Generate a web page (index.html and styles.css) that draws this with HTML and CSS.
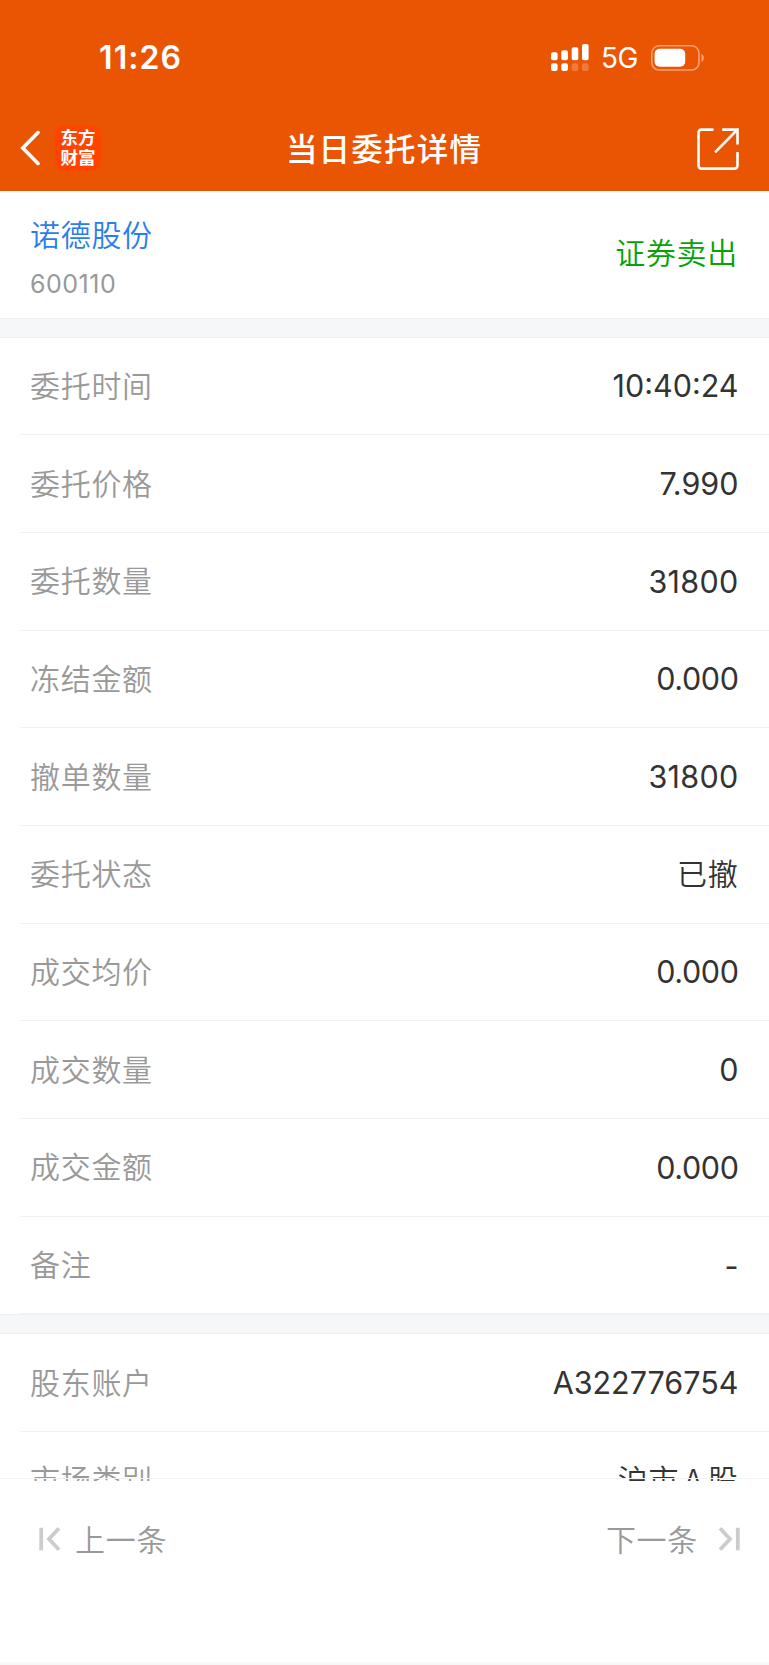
FILE: index.html
```html
<!DOCTYPE html>
<html lang="zh-CN">
<head>
<meta charset="utf-8">
<title>当日委托详情</title>
<link rel="stylesheet" href="styles.css">
</head>
<body>
<div class="screen">
  <header class="header">
    <div class="status">
      <span class="clock">11:26</span>
      <div class="indicators">
        <svg class="signal" width="38" height="27" viewBox="0 0 38 27" fill="#fff">
          <rect x="0" y="8.3" width="6.6" height="7.9" rx="2"/>
          <rect x="10.3" y="6.3" width="6.6" height="9.9" rx="2"/>
          <rect x="20.7" y="3.3" width="6.6" height="12.9" rx="2"/>
          <rect x="31" y="0" width="6.6" height="16.2" rx="2"/>
          <rect x="0" y="19.3" width="6.6" height="7.6" rx="2"/>
          <rect x="10.3" y="19.3" width="6.6" height="7.6" rx="2"/>
          <rect x="20.7" y="19.3" width="6.6" height="7.6" rx="2" opacity=".22"/>
          <rect x="31" y="19.3" width="6.6" height="7.6" rx="2" opacity=".22"/>
        </svg>
        <span class="network">5G</span>
        <svg class="battery" width="54" height="26" viewBox="0 0 54 26">
          <rect x=".8" y=".8" width="47.2" height="24.2" rx="7.4" fill="none" stroke="#fff" stroke-opacity=".45" stroke-width="1.6"/>
          <rect x="3.6" y="3.8" width="30.6" height="18" rx="5" fill="#fff"/>
          <path d="M50.5 9v8c3-1.2 3-6.8 0-8z" fill="#fff" fill-opacity=".5"/>
        </svg>
      </div>
    </div>
    <nav class="navbar">
      <div class="nav-left">
        <svg width="20" height="36" viewBox="0 0 20 36" fill="none" stroke="#fff" stroke-width="3.6" stroke-linecap="round"><path d="M18 2.6 2.8 18 18 33.4"/></svg>
        <div class="logo"><span>东方</span><span>财富</span></div>
      </div>
      <h1 class="title">当日委托详情</h1>
      <svg class="share" width="42" height="42" viewBox="0 0 42 42" fill="none" stroke="#fff" stroke-width="2.6"><path d="M16.5 1.6H4.5a3 3 0 0 0-3 3v33a3 3 0 0 0 3 3h33a3 3 0 0 0 3-3V24M25.2 1.6h15.3v15M40 2 18 24.3"/></svg>
    </nav>
  </header>

  <section class="stock">
    <div class="stock-id">
      <span class="stock-name">诺德股份</span>
      <span class="stock-code">600110</span>
    </div>
    <span class="side">证券卖出</span>
  </section>
  <div class="gap"></div>
  <main class="details">
    <dl class="rows">
      <div class="row"><dt>委托时间</dt><dd>10:40:24</dd></div>
      <div class="row"><dt>委托价格</dt><dd>7.990</dd></div>
      <div class="row"><dt>委托数量</dt><dd class="count">31800</dd></div>
      <div class="row"><dt>冻结金额</dt><dd class="amount">0.000</dd></div>
      <div class="row"><dt>撤单数量</dt><dd class="count">31800</dd></div>
      <div class="row"><dt>委托状态</dt><dd class="cjk">已撤</dd></div>
      <div class="row"><dt>成交均价</dt><dd class="amount">0.000</dd></div>
      <div class="row"><dt>成交数量</dt><dd>0</dd></div>
      <div class="row"><dt>成交金额</dt><dd class="amount">0.000</dd></div>
      <div class="row"><dt>备注</dt><dd>-</dd></div>
    </dl>
    <div class="gap"></div>
    <dl class="rows">
      <div class="row"><dt>股东账户</dt><dd>A322776754</dd></div>
      <div class="row"><dt>市场类别</dt><dd class="cjk">沪市 A 股</dd></div>
    </dl>
  </main>
  <footer class="footer">
    <div class="pager">
      <svg width="22" height="24" viewBox="0 0 22 24" fill="none" stroke="#ccc" stroke-width="3.8"><path d="M2.2 .7v22.6M20 1.3 10 12l10 10.7"/></svg>
      <span>上一条</span>
    </div>
    <div class="pager next">
      <span>下一条</span>
      <svg width="22" height="24" viewBox="0 0 22 24" fill="none" stroke="#ccc" stroke-width="3.8"><path d="M19.8 .7v22.6M2 1.3 12 12 2 22.7"/></svg>
    </div>
  </footer>
</div>
</body>
</html>
```
FILE: styles.css
```css
* { box-sizing: border-box; margin: 0; padding: 0; }
body { background: #fff; font-family: Inter, "Noto Sans CJK SC", sans-serif; }
svg { display: block; flex: none; }
.screen { width: 769px; height: 1665px; display: flex; flex-direction: column; overflow: hidden; border-bottom: 3px solid #f7f7f8; }

.header { height: 191px; flex: none; background: #ea5504; color: #fff; }
.status { height: 106px; padding: 9px 64px 0 99px; display: flex; justify-content: space-between; align-items: center; }
.clock { font-size: 32px; font-weight: 600; letter-spacing: 1.1px; }
.indicators { display: flex; align-items: center; }
.network { width: 62px; padding-left: 12px; font-size: 28px; line-height: 34px; letter-spacing: -.5px; }
.navbar { height: 85px; padding: 0 30px 0 20px; display: grid; grid-template-columns: 1fr auto 1fr; align-items: center; }
.nav-left { display: flex; align-items: center; gap: 15px; padding-bottom: 1px; }
.logo { width: 46px; height: 46px; padding-bottom: 3px; border-radius: 9px; background: #ff4400; display: flex; flex-direction: column; align-items: center; justify-content: center; font-family: "Noto Sans CJK SC", sans-serif; font-size: 17.5px; line-height: 19.5px; font-weight: 700; }
.title { padding: 0 0 4px 9px; font-family: "Noto Sans CJK SC", sans-serif; font-size: 31.5px; font-weight: 500; letter-spacing: 1.2px; line-height: 44px; }
.share { justify-self: end; }

.stock { height: 127px; flex: none; padding: 0 31px 0 30px; display: flex; justify-content: space-between; align-items: center; }
.stock-id { display: flex; flex-direction: column; gap: 9px; padding-top: 2px; }
.stock-name, .side, .row dt, .row .cjk, .pager span { padding-bottom: 4px; font-family: "Noto Sans CJK SC", sans-serif; font-size: 30px; letter-spacing: .7px; line-height: 44px; font-weight: 350; }
.stock-name { color: #2b7de9; }
.stock .stock-name { padding-bottom: 3px; }
.stock-code { color: #999; font-size: 25px; line-height: 34px; letter-spacing: .5px; }
.side { color: #05a305; }
.stock .side { padding-bottom: 7px; }

.gap { height: 20px; flex: none; background: #f6f7f9; border-top: 1px solid #eeeff0; border-bottom: 1px solid #eeeff0; }
.details { height: 1143px; margin: -.5px 0 -2.5px; flex: none; overflow: hidden; }
.rows { padding-left: 20px; }
.row { height: 97.7px; padding: 0 30.5px 0 10px; display: flex; justify-content: space-between; align-items: center; border-bottom: 1px solid #f1f1f2; }
.row dt { color: #999; }
.row dd { color: #333; font-size: 30.5px; font-weight: 400; }
.row .count { letter-spacing: .3px; }
.row .amount { letter-spacing: -.4px; }
.row .cjk { word-spacing: -2.5px; }

.footer { flex: 1; border-top: 1px solid #f3f3f4; padding: 36.5px 29px 0 39px; display: flex; justify-content: space-between; align-items: flex-start; }
.pager { display: flex; align-items: center; gap: 14px; color: #999; }
.pager svg { margin-bottom: 1px; }
.pager.next { gap: 20px; }
```
